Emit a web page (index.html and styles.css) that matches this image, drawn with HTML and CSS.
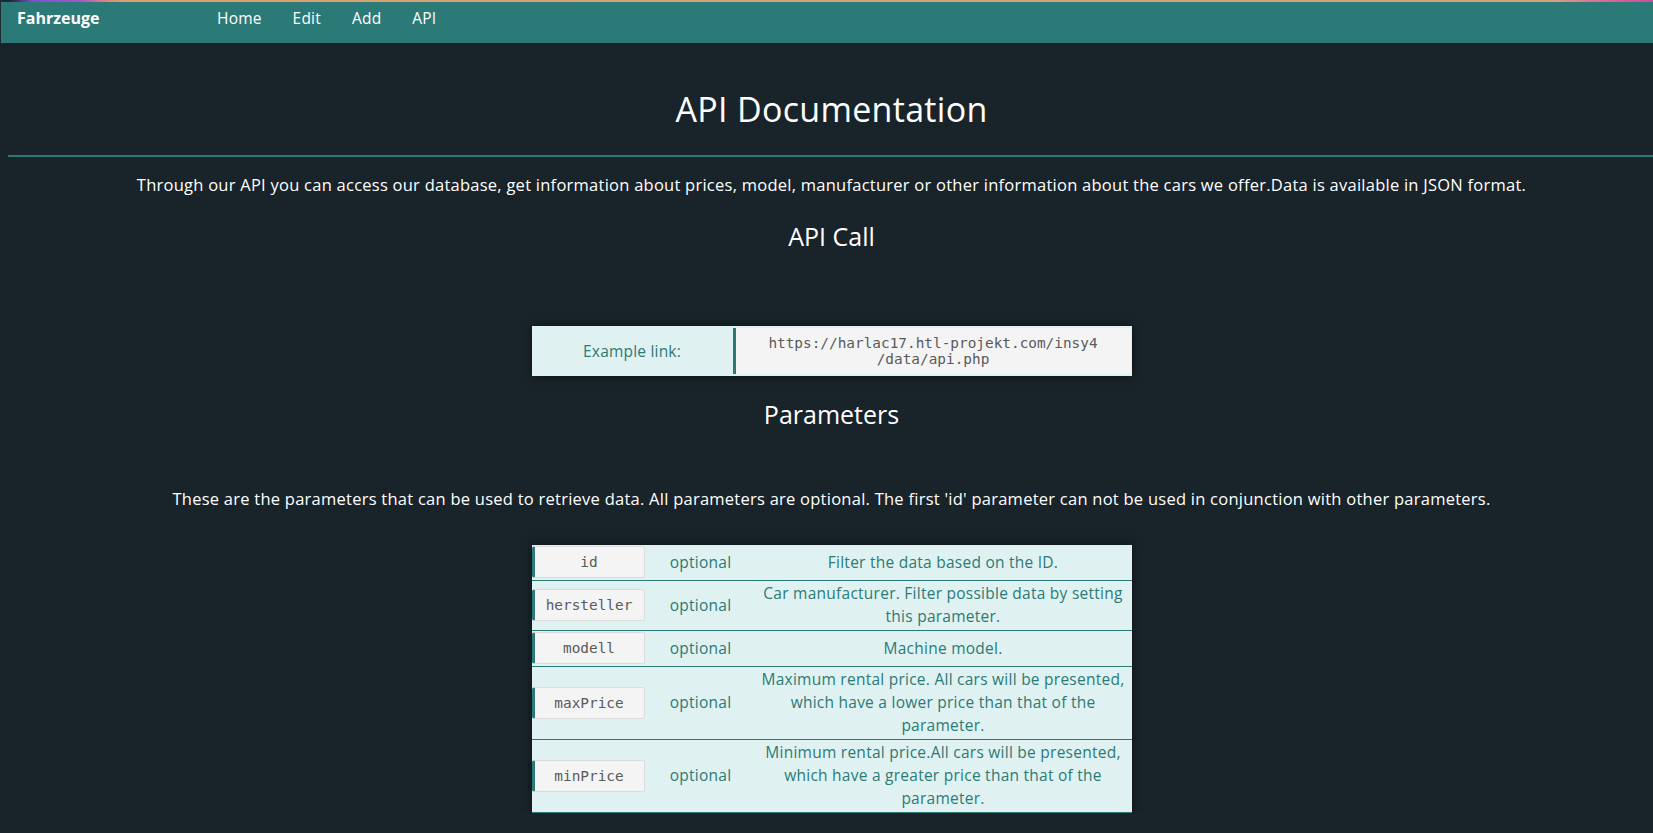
FILE: index.html
```html
<!DOCTYPE html>
<html lang="en">
<head>
<meta charset="utf-8">
<title>API Documentation</title>
<link rel="stylesheet" href="styles.css">
</head>
<body>
<div class="topline"></div>
<nav class="navbar">
  <a class="brand" href="#">Fahrzeuge</a>
  <ul class="nav-links">
    <li><a href="#">Home</a></li>
    <li><a href="#">Edit</a></li>
    <li><a href="#">Add</a></li>
    <li><a href="#">API</a></li>
  </ul>
</nav>
<main class="page">
  <h1 class="title">API Documentation</h1>
  <hr class="rule">
  <section class="content">
    <p class="lead">Through our API you can access our database, get information about prices, model, manufacturer or other information about the cars we offer.Data is available in JSON format.</p>
    <h2 class="section-title">API Call</h2>
    <div class="example">
      <div class="example-label">Example link:</div>
      <div class="example-code"><code>https://harlac17.htl-projekt.com/insy4<br>/data/api.php</code></div>
    </div>
    <h2 class="section-title params-title">Parameters</h2>
    <p class="lead params-lead">These are the parameters that can be used to retrieve data. All parameters are optional. The first 'id' parameter can not be used in conjunction with other parameters.</p>
    <table class="params">
      <tr>
        <td class="c-name"><code>id</code></td>
        <td class="c-opt">optional</td>
        <td class="c-desc">Filter the data based on the ID.</td>
      </tr>
      <tr>
        <td class="c-name"><code>hersteller</code></td>
        <td class="c-opt">optional</td>
        <td class="c-desc">Car manufacturer. Filter possible data by setting this parameter.</td>
      </tr>
      <tr>
        <td class="c-name"><code>modell</code></td>
        <td class="c-opt">optional</td>
        <td class="c-desc">Machine model.</td>
      </tr>
      <tr>
        <td class="c-name"><code>maxPrice</code></td>
        <td class="c-opt">optional</td>
        <td class="c-desc">Maximum rental price. All cars will be presented, which have a lower price than that of the parameter.</td>
      </tr>
      <tr>
        <td class="c-name"><code>minPrice</code></td>
        <td class="c-opt">optional</td>
        <td class="c-desc">Minimum rental price.All cars will be presented, which have a greater price than that of the parameter.</td>
      </tr>
    </table>
  </section>
</main>
</body>
</html>
```
FILE: styles.css
```css
* { box-sizing: border-box; }
html, body { margin: 0; padding: 0; }
body {
  background: #19242a;
  color: #ffffff;
  font-family: "Open Sans", "DejaVu Sans", sans-serif;
  overflow: hidden;
}
.topline {
  height: 2px;
  background: linear-gradient(to right, #1b2a30 0, #1b2a30 0.6%, #7d4fd0 2%, #a35ac4 5%, #e07d86 6.2%, #d9a070 7.5%, #cfa57c 60%, #d0a47c 94%, #d96a98 97%, #c94fa0 100%);
}
.navbar {
  height: 41px;
  background: #2c7a77;
  border-left: 1px solid #1c2d33;
  display: flex;
  align-items: center;
  padding-left: 16px;
  padding-bottom: 9px;
}
.brand {
  color: #fff;
  text-decoration: none;
  font-weight: 700;
  font-size: 16px;
  letter-spacing: 0;
  width: 200px;
}
.nav-links {
  list-style: none;
  margin: 0;
  padding: 0;
  display: flex;
  gap: 31px;
}
.nav-links a {
  color: #fff;
  text-decoration: none;
  font-size: 15.5px;
  letter-spacing: 0.2px;
}
.page {
  padding-left: 8px;
}
.title {
  margin: 0;
  padding-top: 44px;
  padding-left: 2px;
  text-align: center;
  font-weight: 400;
  font-size: 34px;
  letter-spacing: 0.3px;
  line-height: 44px;
  height: 112px;
}
.rule {
  margin: 0;
  border: 0;
  height: 2px;
  background: #2c7a77;
}
.content {
  padding-left: 2px;
  display: flex;
  flex-direction: column;
  align-items: center;
}
.lead {
  margin: 17px 0 0;
  font-size: 16.5px;
  letter-spacing: 0.25px;
  line-height: 22px;
  text-align: center;
}
.section-title {
  margin: 26px 0 0;
  font-size: 25px;
  font-weight: 500;
  line-height: 28px;
}
.example {
  margin-top: 76px;
  width: 600px;
  height: 50px;
  display: flex;
  background: #dff2f1;
  box-shadow: 0 0 10px rgba(0, 0, 0, 0.55);
}
.example-label {
  width: 201px;
  display: flex;
  align-items: center;
  justify-content: center;
  color: #2c7a77;
  font-size: 15.5px;
  letter-spacing: 0.2px;
}
.example-code {
  flex: 1;
  margin: 2px 1px 2px 0;
  background: #f4f4f4;
  border-left: 3px solid #2c7a77;
  display: flex;
  align-items: center;
  justify-content: center;
  text-align: center;
}
.example-code code, .c-name code {
  font-family: "DejaVu Sans Mono", "Liberation Mono", monospace;
  font-size: 14.4px;
  line-height: 16px;
  color: #5a5a5a;
}
.params-title { margin-top: 24px; }
.params-lead { margin-top: 60px; }
.params {
  margin-top: 35px;
  width: 600px;
  border-collapse: collapse;
  background: #dff2f1;
  box-shadow: 0 0 10px rgba(0, 0, 0, 0.55);
  color: #2c7a77;
  font-size: 15.5px;
  letter-spacing: 0.25px;
}
.params tr { border-bottom: 1px solid #2c7a77; }
.params td {
  padding: 1px 0 2px 0;
  text-align: center;
  vertical-align: middle;
  line-height: 23px;
}
.c-name { width: 115px; }
.c-name code {
  display: flex;
  align-items: center;
  justify-content: center;
  width: 113px;
  height: 32px;
  letter-spacing: 0;
  background: #f4f4f4;
  border: 1px solid #dcdcdc;
  border-left: 3px solid #2c7a77;
  border-radius: 3px;
}
.c-opt { width: 108px; }
.c-desc { padding-right: 4px !important; padding-left: 4px !important; }
```
